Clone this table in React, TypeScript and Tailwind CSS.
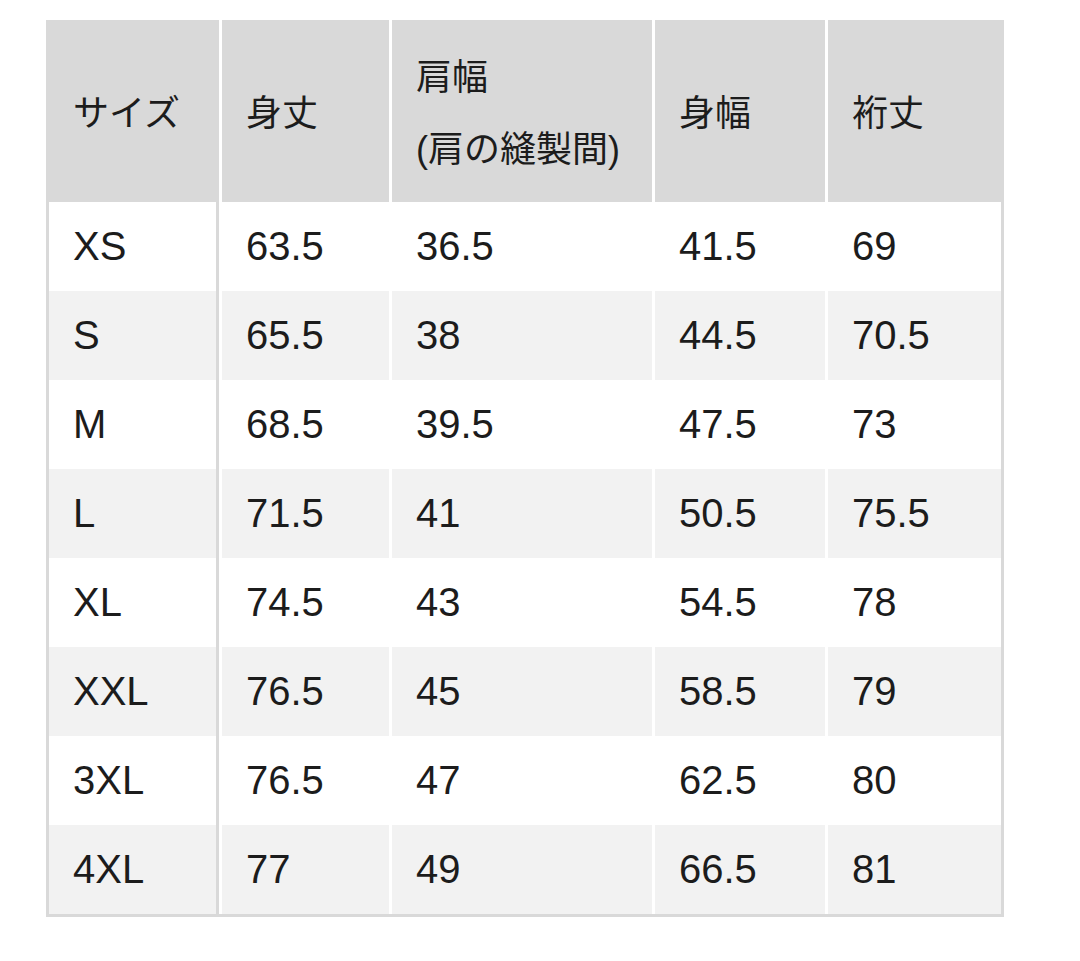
const headers: string[][] = [
  ["サイズ"],
  ["身丈"],
  ["肩幅", "(肩の縫製間)"],
  ["身幅"],
  ["裄丈"],
];

const rows: string[][] = [
  ["XS", "63.5", "36.5", "41.5", "69"],
  ["S", "65.5", "38", "44.5", "70.5"],
  ["M", "68.5", "39.5", "47.5", "73"],
  ["L", "71.5", "41", "50.5", "75.5"],
  ["XL", "74.5", "43", "54.5", "78"],
  ["XXL", "76.5", "45", "58.5", "79"],
  ["3XL", "76.5", "47", "62.5", "80"],
  ["4XL", "77", "49", "66.5", "81"],
];

const cols = "grid grid-cols-[170px_167px_260px_170px_173px] gap-x-[3px]";

export default function App() {
  return (
    <div
      className="min-h-screen bg-white pt-5 pl-[46px] text-[#1c1c1c]"
      style={{ fontFamily: '"Liberation Sans", "Noto Sans CJK JP", sans-serif' }}
    >
      <div className="w-[958px] border-x-[3px] border-b-[3px] border-[#d9d9d9]">
        {/* header */}
        <div className={`${cols} h-[182px]`}>
          {headers.map((h, i) => (
            <div
              key={i}
              className={`flex flex-col justify-center bg-[#d9d9d9] pt-[6px] pl-6 text-[36px] leading-[72px] ${
                i === 0 ? "border-r-[3px] border-[#d9d9d9]" : ""
              }`}
            >
              {h.map((line) => (
                <span key={line}>{line}</span>
              ))}
            </div>
          ))}
        </div>

        {/* body */}
        {rows.map((r, ri) => (
          <div key={r[0]} className={`${cols} h-[89px]`}>
            {r.map((v, ci) => (
              <div
                key={ci}
                className={`flex items-center pb-[2px] pl-6 text-[40px] ${
                  ri % 2 === 1 ? "bg-[#f2f2f2]" : "bg-white"
                } ${ci === 0 ? "border-r-[3px] border-[#d9d9d9]" : ""}`}
              >
                {v}
              </div>
            ))}
          </div>
        ))}
      </div>
    </div>
  );
}
